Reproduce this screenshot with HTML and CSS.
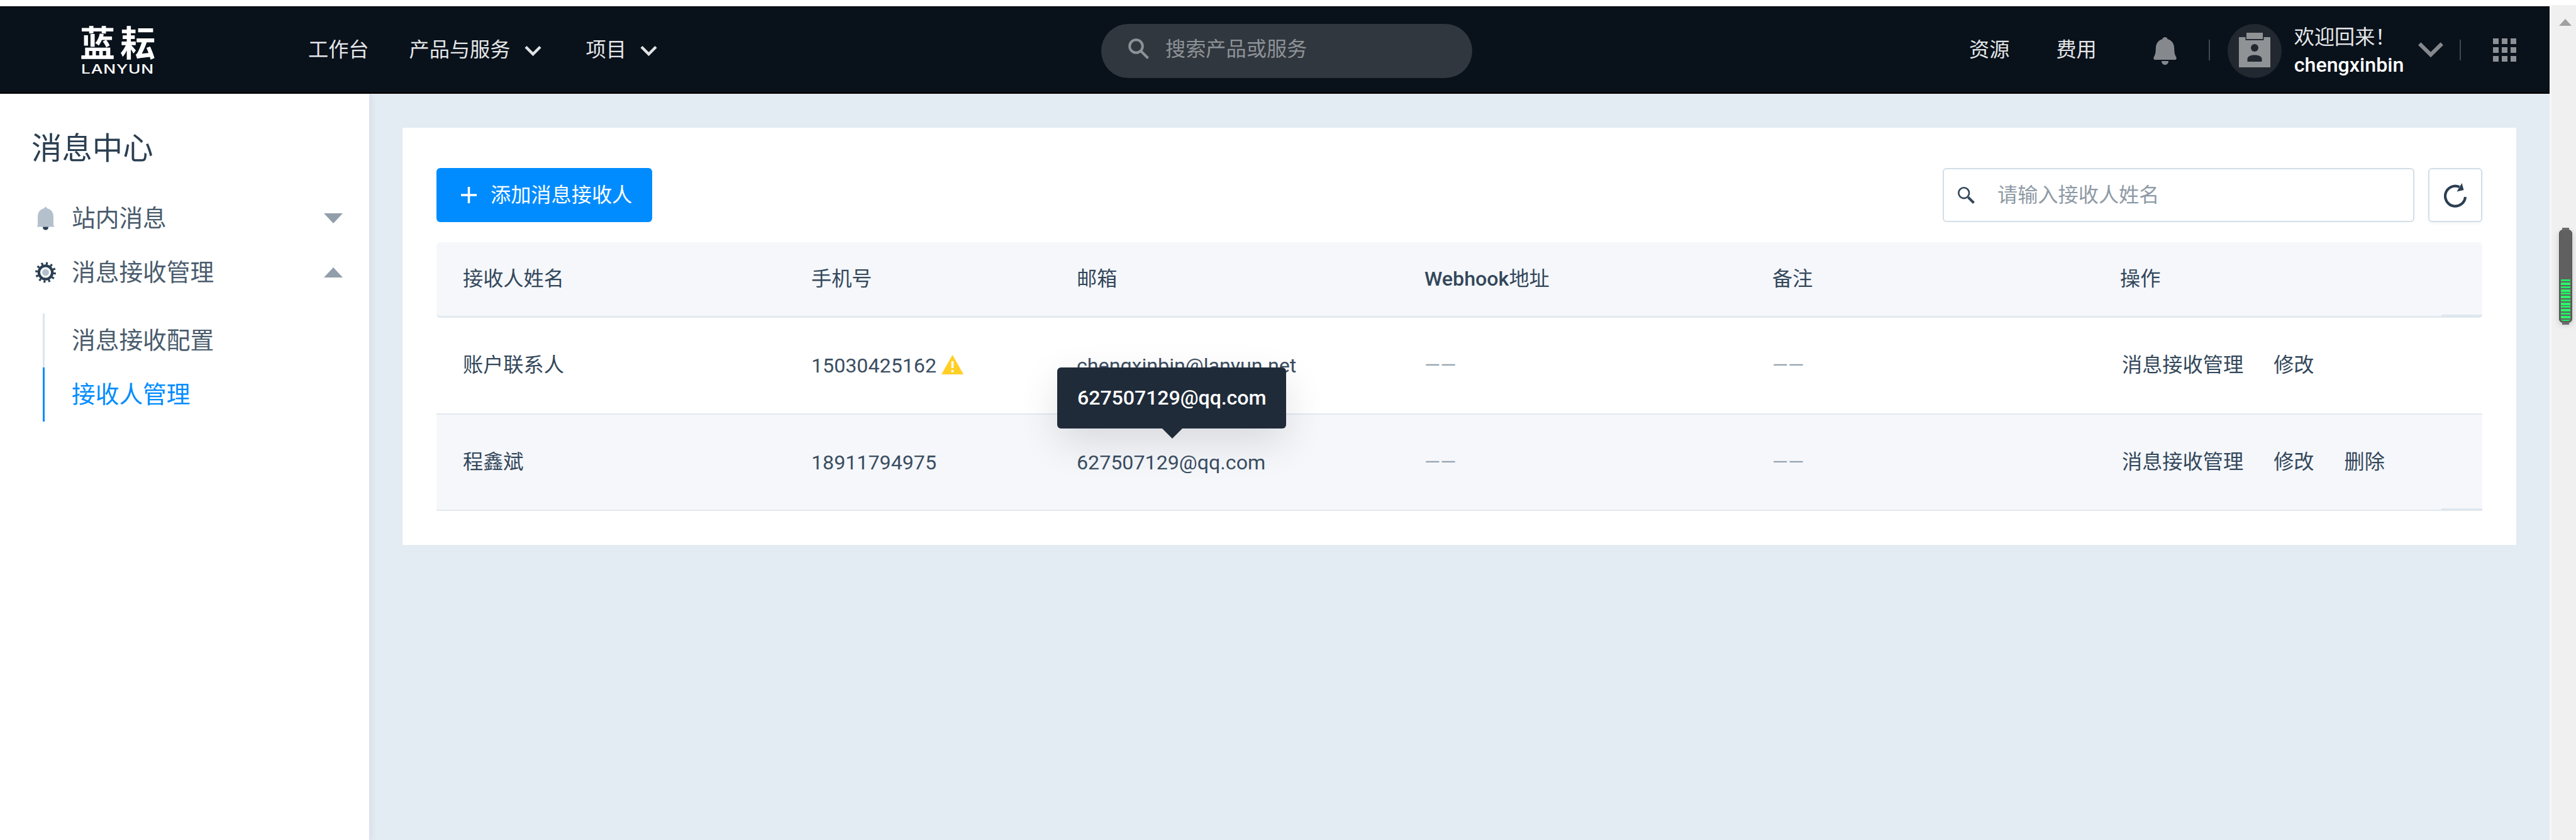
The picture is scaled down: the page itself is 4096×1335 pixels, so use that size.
FILE: index.html
```html
<!DOCTYPE html>
<html lang="zh-CN">
<head>
<meta charset="utf-8">
<title>消息中心</title>
<link rel="stylesheet" href="styles.css">
</head>
<body>
<div class="window">
  <div class="app">
    <header class="topbar">
      <div class="logo">
        <span class="logo-cn">蓝耘</span>
        <span class="logo-en">LANYUN</span>
      </div>
      <nav class="nav">
        <a class="nav-item">工作台</a>
        <a class="nav-item">产品与服务
          <svg class="caret" viewBox="0 0 27 17"><path d="M2 2.5 13.5 14 25 2.500" /></svg>
        </a>
        <a class="nav-item">项目
          <svg class="caret" viewBox="0 0 27 17"><path d="M2 2.5 13.5 14 25 2.500" /></svg>
        </a>
      </nav>
      <div class="global-search">
        <svg class="global-search-icon" viewBox="0 0 34 34"><circle cx="12.500" cy="12.500" r="10.300"/><path d="M20 20 31.500 31.500"/></svg>
        <span>搜索产品或服务</span>
      </div>
      <div class="tools">
        <a class="tool">资源</a>
        <a class="tool">费用</a>
        <svg class="bell" viewBox="0 0 37 44"><path d="M18.500 0c2.400 0 3.800 1.300 4.200 3.200C29.600 5 33 10.500 33.200 18c.2 6.500.6 9.500 3 13.500.8 1.500.8 3.500-.8 4.500H1.600c-1.600-1-1.600-3-.8-4.500 2.400-4 2.800-7 3-13.500C4 10.500 7.400 5 14.300 3.200 14.700 1.300 16.100 0 18.500 0z"/><path d="M13 38h11c0 3.500-2.200 6-5.500 6S13 41.500 13 38z"/></svg>
        <i class="divider"></i>
        <div class="avatar">
          <svg viewBox="0 0 50 55"><path d="M0 7h10.500v5h29V7H50v48H0z"/><path d="M12 0h26v10H12z"/><circle class="hole" cx="25" cy="24" r="6"/><path class="hole" d="M13.500 46v-4c0-4 4-6.500 11.500-6.500S36.500 38 36.500 42v4z"/></svg>
        </div>
        <div class="user">
          <span class="hello">欢迎回来！</span>
          <span class="username">chengxinbin</span>
        </div>
        <svg class="user-caret" viewBox="0 0 40 24"><path d="M2.200 2.500 20 20 37.800 2.500"/></svg>
        <i class="divider"></i>
        <div class="apps"><i></i><i></i><i></i><i></i><i></i><i></i><i></i><i></i><i></i></div>
      </div>
    </header>

    <div class="body">
      <aside class="sidebar">
        <h1 class="side-title">消息中心</h1>
        <div class="side-item">
          <svg class="side-icon" viewBox="0 0 33 38"><path fill="#b4c1cd" d="M16.500 0l2.200 3C25 4.200 29 9.500 29 16.500V30l1.800 2.500H2.200L4 30V16.500C4 9.500 8 4.200 14.300 3z"/><path fill="#2b3f52" d="M12 32.500h9c0 3-1.500 5-4.500 5s-4.500-2-4.500-5z"/></svg>
          <span>站内消息</span>
          <i class="arrow arrow-down"></i>
        </div>
        <div class="side-item">
          <svg class="side-icon gear" viewBox="0 0 34 36"><circle cx="17" cy="18" r="14.800" fill="none" stroke="#2b3f52" stroke-width="4.200" stroke-dasharray="3.200 4.549"/><circle cx="17" cy="18" r="11" fill="none" stroke="#2b3f52" stroke-width="4.400"/><circle cx="17" cy="18" r="5.600" fill="#b4c1cd"/></svg>
          <span>消息接收管理</span>
          <i class="arrow arrow-up"></i>
        </div>
        <div class="submenu">
          <a class="sub-item">消息接收配置</a>
          <a class="sub-item active">接收人管理</a>
        </div>
      </aside>

      <main class="main">
        <section class="card">
          <div class="toolbar">
            <button class="add-btn">
              <svg viewBox="0 0 25 26"><path d="M0 13h25M12.500 0v26"/></svg>
              <span>添加消息接收人</span>
            </button>
            <div class="search">
              <svg class="search-icon" viewBox="0 0 27 27"><circle cx="9.700" cy="9.700" r="8.400"/><path d="M16.500 16.500 25.500 25.500" class="handle"/></svg>
              <span>请输入接收人姓名</span>
            </div>
            <button class="refresh">
              <svg viewBox="0 0 36 40"><path class="ring" d="M24.500 6A16 16 0 1 0 34 22"/><path class="tip" d="M28.500 0 31.500 11 20.500 13.500z"/></svg>
            </button>
          </div>

          <div class="table">
            <div class="row head tail">
              <div>接收人姓名</div><div>手机号</div><div>邮箱</div><div><b>Webhook</b>地址</div><div>备注</div><div>操作</div>
            </div>
            <div class="row">
              <div>账户联系人</div>
              <div class="num">15030425162<svg class="warn" viewBox="0 0 35 31"><path fill="#ffcf25" d="M17.500 0 35 31H0z"/><path fill="#fff" d="M15.700 10h3.600v11h-3.600zM15.700 24h3.600v3.500h-3.600z"/></svg></div>
              <div class="num">chengxinbin@lanyun.net</div>
              <div class="none">——</div>
              <div class="none">——</div>
              <div class="actions"><a>消息接收管理</a><a>修改</a></div>
            </div>
            <div class="row hover tail">
              <div>程鑫斌</div>
              <div class="num">18911794975</div>
              <div class="num mail">627507129@qq.com<span class="tooltip">627507129@qq.com</span></div>
              <div class="none">——</div>
              <div class="none">——</div>
              <div class="actions"><a>消息接收管理</a><a>修改</a><a>删除</a></div>
            </div>
          </div>
        </section>
      </main>
    </div>
  </div>

  <div class="scrollbar">
    <i class="scroll-up"></i>
    <div class="battery"><div class="charge"></div></div>
  </div>
</div>
</body>
</html>
```
FILE: styles.css
```css
* { box-sizing: border-box; }
body {
  margin: 0;
  background: #fff;
  color: #33475a;
  font-family: Roboto, "Noto Sans CJK SC", sans-serif;
  font-size: 32.2px;
  line-height: 44px;
}
svg { display: block; flex: none; }
button { font: inherit; padding: 0; cursor: pointer; }
.window { display: flex; width: 4096px; height: 1335px; overflow: hidden; }
.app { width: 4054px; height: 1335px; padding-top: 10px; display: flex; flex-direction: column; flex: none; }

/* top bar */
.topbar {
  height: 139px; flex: none; display: flex; align-items: center;
  background: #09111a; color: #e4e6e8; white-space: nowrap;
  border-top: 1px solid #000; border-bottom: 2px solid #000;
  position: relative; z-index: 2;
}
.logo { width: 132px; margin-left: 127px; padding-top: 4px; color: #fff; display: flex; flex-direction: column; }
.logo-cn { font-size: 56px; line-height: 58px; font-weight: 700; letter-spacing: 8px; }
.logo-en { font-size: 19.500px; line-height: 22px; margin-left: 2px; letter-spacing: .6px; font-family: Inter, sans-serif; font-weight: 500; transform: scaleX(1.350); transform-origin: 0 0; }
.nav { display: flex; margin-left: 231px; width: 1261px; }
.nav-item { display: flex; align-items: center; margin-right: 64px; }
.caret { width: 27px; height: 17px; margin: 2px 0 0 22px; }
.nav-item:nth-child(2) { margin-right: 71px; }
.caret path { fill: none; stroke: #e0e2e4; stroke-width: 4.500; }
.global-search {
  width: 590px; height: 86px; margin-top: 3px; padding: 0 0 5px 43px; border-radius: 43px;
  display: flex; align-items: center; gap: 25px; background: #31373e; color: #8d9297;
}
.global-search-icon { width: 34px; height: 34px; fill: none; stroke: #8d9297; stroke-width: 4; }
.tools { display: flex; align-items: center; margin-left: 790px; }
.tool { margin-right: 73px; }
.tool:nth-child(2) { margin-left: 1px; }
.bell { width: 37px; height: 44px; margin: 4px 0 0 17px; fill: #85898d; }
.divider { width: 2px; height: 33px; background: #41474d; margin-left: 51px; }
.avatar { width: 86px; height: 86px; margin: 3px 0 0 28px; padding-bottom: 3px; border-radius: 50%; background: #22282f; display: flex; align-items: center; justify-content: center; }
.avatar svg { width: 50px; height: 55px; fill: #8f9396; }
.avatar .hole { fill: #22282f; }
.user { margin: 4px 0 0 20px; display: flex; flex-direction: column; }
.hello { width: 170px; }
.username { width: 174px; color: #fff; font-weight: 500; }
.user-caret { width: 40px; height: 24px; margin-left: 23px; }
.user-caret path { fill: none; stroke: #85898d; stroke-width: 6; }
.user-caret + .divider { margin-left: 26px; }
.apps { display: grid; grid-template-columns: repeat(3, 9px); gap: 5px; margin-left: 51px; }
.apps i { height: 9px; background: #8d9195; }

/* body */
.body { flex: 1; display: flex; background: #e3ebf3; }
.sidebar { width: 587px; flex: none; background: #fff; padding-top: 53px; font-size: 37.700px; color: #4a5c6d; box-shadow: 0 0 14px rgba(30, 50, 70, .10); }
.side-title { margin: 0 0 32px 50px; font-size: 48.400px; line-height: 70px; font-weight: 400; color: #2b3f52; }
.side-item { height: 86px; display: flex; align-items: center; padding: 0 42px 0 56px; }
.side-icon { width: 33px; height: 38px; margin-right: 25px; }
.arrow { margin-left: auto; border: 15px solid transparent; }
.arrow-down { border-top: 16px solid #929eaa; border-bottom: 0; }
.arrow-up { border-bottom: 16px solid #929eaa; border-top: 0; }
.submenu { margin: 22px 0 0 68px; }
.sub-item { height: 86px; display: flex; align-items: center; padding-left: 43px; border-left: 3px solid #dde5ee; }
.sub-item.active { border-left-color: #008cff; color: #008cff; }

.main { flex: 1; padding: 54px 53px 0; }
.card { height: 663px; background: #fff; padding: 64px 54px 0; }
.toolbar { display: flex; height: 86px; }
.add-btn { width: 343px; border: 0; border-radius: 6px; background: #008cff; color: #fff; display: flex; align-items: center; padding: 0 0 0 39px; gap: 22px; }
.add-btn svg { width: 25px; height: 26px; fill: none; stroke: #fff; stroke-width: 3.500; }
.search { width: 750px; margin-left: auto; border: 2px solid #d3dee7; border-radius: 6px; display: flex; align-items: center; padding-left: 22px; gap: 36px; color: #8e9aa5; }
.search-icon { width: 27px; height: 27px; fill: none; stroke: #33475a; stroke-width: 2.600; }
.search-icon .handle { stroke-width: 4; }
.refresh { width: 86px; margin-left: 22px; border: 2px solid #d3dee7; border-radius: 6px; background: #fff; display: flex; align-items: center; justify-content: center; box-shadow: 0 3px 5px rgba(0, 60, 60, .04); }
.refresh svg { width: 36px; height: 40px; margin-top: 2px; }
.ring { fill: none; stroke: #2b3f52; stroke-width: 4.200; }
.tip { fill: #2b3f52; }

/* recipients table */
.table { margin-top: 32px; }
.row { position: relative; display: grid; grid-template-columns: 553px 422px 553px 553px 553px 619px; height: 154px; border-bottom: 2px solid #e1e9f0; align-items: center; }
.row > div { padding: 0 0 2px 43px; }
.row > div:first-child { padding-left: 42px; }
.head { height: 120px; background: #f5f7fb; border-radius: 6px; border-bottom: 3px solid #e1e9ef; color: #33475a; }
.head b { font-weight: 500; }
.hover { height: 153px; background: #f5f7fb; }
.tail::after { content: ""; position: absolute; right: 0; bottom: -2px; width: 65px; height: 4px; background: #dfe7ee; border-radius: 0 0 6px 0; }
.row > .num { display: flex; align-items: center; color: #3b4e61; padding-bottom: 0; }
.warn { width: 35px; height: 31px; margin: 0 0 4px 8px; }
.none { color: #96a3b0; }
.actions { display: flex; gap: 48px; margin-left: 3px; }
.mail { position: relative; }
.tooltip {
  position: absolute; left: 12px; bottom: 76px; height: 97px; width: 364px;
  padding: 26px 0 0 32px; border-radius: 6px; background: #1f2b39; color: #fff; font-weight: 500; letter-spacing: -.1px;
  box-shadow: 0 22px 64px rgba(0, 0, 0, .12);
}
.tooltip::after { content: ""; position: absolute; left: 167px; top: 97px; border: 16px solid transparent; border-top-color: #1f2b39; border-bottom: 0; }

/* window scrollbar */
.scrollbar { width: 42px; margin-top: 8px; padding-left: 12px; background: #f0f0f0; border-left: 3px solid #f7f7f7; }
.scroll-up { display: block; margin-top: 22px; width: 0; border: 10px solid transparent; border-bottom: 11px solid #a0a0a0; border-top: 0; }
.battery {
  position: relative; width: 21px; height: 148px; margin-top: 324px; padding: 78px 2px 2px;
  background: #606060; border: 1px solid #505050; border-radius: 6px; box-shadow: 0 3px 10px rgba(0, 0, 0, .18);
}
.battery::before, .battery::after { content: ""; position: absolute; left: 4px; width: 11px; height: 4px; background: #6a6a6a; }
.battery::before { top: -4px; }
.battery::after { bottom: -4px; }
.charge { height: 66px; border-radius: 0 0 4px 4px; background: repeating-linear-gradient(#23ef62 0 3px, #606060 3px 5px, #2bf869 5px 9px, #606060 9px 10.600px); }
```
